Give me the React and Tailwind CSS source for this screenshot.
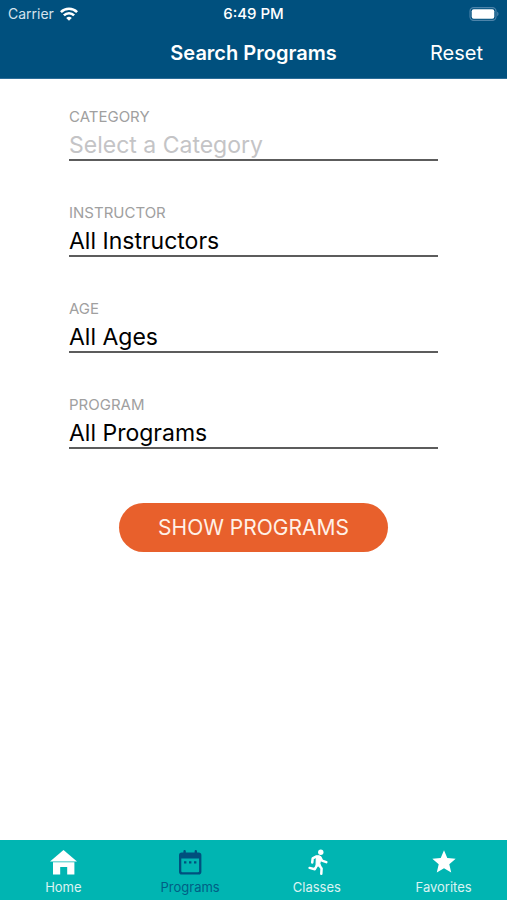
import React, { useState } from "react";
import { MdStar } from "react-icons/md";

const FIELDS = [
  { id: "category", label: "CATEGORY", text: "Select a Category", empty: true },
  { id: "instructor", label: "INSTRUCTOR", text: "All Instructors" },
  { id: "age", label: "AGE", text: "All Ages" },
  { id: "program", label: "PROGRAM", text: "All Programs" },
];

function HomeIcon({ className }) {
  return (
    <svg viewBox="0 0 28 28" fill="currentColor" className={className} aria-hidden="true">
      <path d="M14.5 2 28 13.5H1z" />
      <path d="M4 14.2h21.4v12.3h-7.2V19h-7v7.5H4z" />
    </svg>
  );
}

function CalendarIcon({ className }) {
  return (
    <svg viewBox="0 0 28 28" fill="currentColor" className={className} aria-hidden="true">
      <path
        fillRule="evenodd"
        d="M7.4 3.2a1.2 1.2 0 0 1 2.4 0v1.2h8.8V3.2a1.2 1.2 0 0 1 2.4 0v1.2h1.6a2.8 2.8 0 0 1 2.8 2.8v16.6a2.8 2.8 0 0 1-2.8 2.8H5.8A2.8 2.8 0 0 1 3 23.8V7.2a2.8 2.8 0 0 1 2.8-2.8h1.6zM5.3 10.5v12.7a1.1 1.1 0 0 0 1.1 1.1H22a1.1 1.1 0 0 0 1.1-1.1V10.500z"
      />
      <path d="M8 13.2h2.4v2.4H8zM13 13.2h2.4v2.4H13zM18 13.2h2.4v2.4H18z" />
    </svg>
  );
}

function RunnerIcon({ className }) {
  return (
    <svg
      viewBox="0 0 28 28"
      fill="none"
      stroke="currentColor"
      strokeWidth="2.5"
      strokeLinecap="round"
      strokeLinejoin="round"
      className={className}
      aria-hidden="true"
    >
      <circle cx="17.8" cy="4.2" r="2.7" fill="currentColor" stroke="none" />
      <path d="M15.8 8.6H13l-3.3 1.7-.5 4.2" />
      <path d="M17.2 9.2 19 12.6l4.3 1.5" />
      <path d="M13.4 8.3h3.6l.9 2-1.2 5.5 1 2.200h-4.600z" fill="currentColor" strokeWidth="1.2" />
      <path d="m14.2 17-2.400 4.200-5.200-1.300" />
      <path d="m15.800 16.800 2.800 3.600-.3 5.400" />
    </svg>
  );
}

const TABS = [
  { name: "Home", Icon: HomeIcon },
  { name: "Programs", Icon: CalendarIcon },
  { name: "Classes", Icon: RunnerIcon },
  { name: "Favorites", Icon: MdStar },
];

function StatusBar() {
  return (
    <div className="grid h-7 grid-cols-3 items-center px-2">
      <div className="flex items-center gap-1.5 text-sm text-[#d5e3ed]">
        <span>Carrier</span>
        <svg viewBox="0 0 18 14" className="h-3.5 w-[18px] text-white" fill="none" stroke="currentColor" strokeWidth="2.6" aria-hidden="true">
          <path d="M.9 5.1a11.5 11.5 0 0 1 16.2 0" />
          <path d="M3.9 8.4a7.2 7.2 0 0 1 10.2 0" />
          <path d="M9 13.8 6.2 11a4 4 0 0 1 5.6 0z" fill="currentColor" stroke="none" />
        </svg>
      </div>
      <span className="text-center text-[15px] leading-5 font-medium">6:49 PM</span>
      <svg viewBox="0 0 30 14" className="h-3.5 w-[30px] justify-self-end" aria-hidden="true">
        <rect x="1" y=".6" width="26" height="12.8" rx="3.6" fill="none" stroke="#4d84aa" strokeWidth="1.1" />
        <rect x="2.7" y="2.3" width="22.6" height="9.4" rx="2" fill="#fff" />
        <path d="M28.2 4.8c1.7.6 1.7 3.8 0 4.4z" fill="#4d84aa" />
      </svg>
    </div>
  );
}

function Field({ id, label, text, empty }) {
  return (
    <div className="flex flex-col">
      <label htmlFor={id} className="text-[15px] leading-5 text-[#a0a0a0]">
        {label}
      </label>
      <select
        id={id}
        className={`h-[34px] w-full appearance-none rounded-none border-b-2 border-[#5c5c5c] bg-transparent pt-1 text-[23px] leading-7 outline-none ${
          empty ? "text-[#c4c4c6]" : "text-black"
        }`}
      >
        <option>{text}</option>
      </select>
    </div>
  );
}

export default function App() {
  const [active, setActive] = useState("Programs");

  return (
    <div className="flex min-h-screen flex-col bg-white font-['Inter','Liberation_Sans',sans-serif]">
      <header className="border-b border-[#2c6d98] bg-[#00507e] text-white">
        <StatusBar />
        <div className="grid h-[50px] grid-cols-[1fr_auto_1fr] items-center px-6">
          <h1 className="col-start-2 text-xl font-semibold">Search Programs</h1>
          <button type="button" className="justify-self-end text-xl">
            Reset
          </button>
        </div>
      </header>

      <main className="flex flex-1 flex-col px-[69px] pt-7">
        <form className="flex flex-col gap-[42px]" onSubmit={(e) => e.preventDefault()}>
          {FIELDS.map((field) => (
            <Field key={field.id} {...field} />
          ))}
          <button type="submit" className="mt-3 h-[49px] self-center rounded-full bg-[#e8602c] px-[39px] text-[21px] text-[#fff1e8]">
            SHOW PROGRAMS
          </button>
        </form>
      </main>

      <nav className="grid h-[60px] grid-cols-4 bg-[#00b5b2]">
        {TABS.map(({ name, Icon }) => (
          <button
            key={name}
            type="button"
            onClick={() => setActive(name)}
            className={`flex flex-col items-center pt-2 text-[13px] leading-[22px] ${
              active === name ? "text-[#00507e]" : "text-white"
            }`}
          >
            <Icon className="size-7" />
            <span className="opacity-85">{name}</span>
          </button>
        ))}
      </nav>
    </div>
  );
}
